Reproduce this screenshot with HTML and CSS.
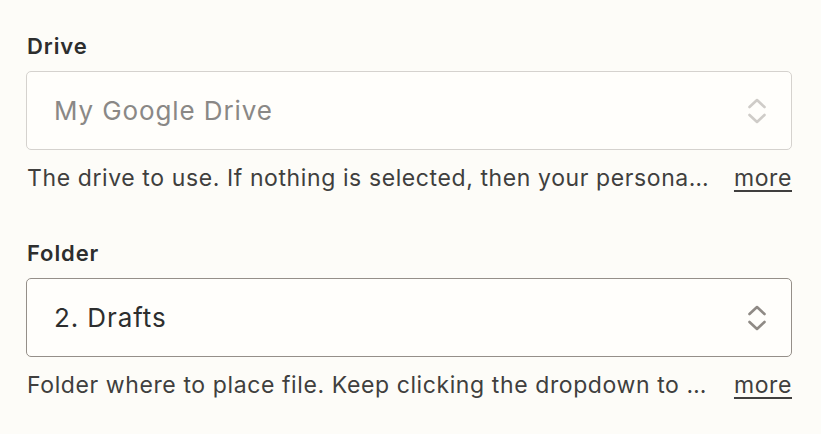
FILE: index.html
```html
<!DOCTYPE html>
<html lang="en">
<head>
    <meta charset="UTF-8">
    <meta name="viewport" content="width=device-width, initial-scale=1.0">
    <title>Google Drive fields</title>
    <link rel="stylesheet" href="styles.css">
</head>
<body>
    <div class="form">
        <!-- Drive field -->
        <div class="field">
            <label class="field-label">Drive</label>
            <div class="select disabled">
                <span class="select-value">My Google Drive</span>
                <svg class="chevrons" width="20" height="28" viewBox="0 0 20 28" fill="none" stroke="currentColor" stroke-width="2.6" stroke-linecap="round" stroke-linejoin="round">
                    <path d="M2.5 10 L10 3 L17.5 10"/>
                    <path d="M2.5 18 L10 25 L17.5 18"/>
                </svg>
            </div>
            <div class="help">
                <p class="help-text">The drive to use. If nothing is selected, then your personal Google Drive will be used.</p>
                <a class="more" href="#">more</a>
            </div>
        </div>

        <!-- Folder field -->
        <div class="field">
            <label class="field-label">Folder</label>
            <div class="select">
                <span class="select-value">2. Drafts</span>
                <svg class="chevrons" width="20" height="28" viewBox="0 0 20 28" fill="none" stroke="currentColor" stroke-width="2.6" stroke-linecap="round" stroke-linejoin="round">
                    <path d="M2.5 10 L10 3 L17.5 10"/>
                    <path d="M2.5 18 L10 25 L17.5 18"/>
                </svg>
            </div>
            <div class="help">
                <p class="help-text">Folder where to place file. Keep clicking the dropdown to go into subfolders.</p>
                <a class="more" href="#">more</a>
            </div>
        </div>
    </div>
</body>
</html>
```

FILE: styles.css
```css
* {
    margin: 0;
    padding: 0;
    box-sizing: border-box;
}

body {
    font-family: Inter, "Noto Sans", sans-serif;
    background-color: #fdfcf8;
    color: #403f3e;
}

.form {
    width: 766px;
    margin: 32px 0 0 26px;
    display: flex;
    flex-direction: column;
    gap: 45px;
}

.field-label {
    display: block;
    font-size: 22px;
    font-weight: 600;
    line-height: 28px;
    letter-spacing: 0.9px;
    color: #2d2e2e;
    padding-left: 1px;
    margin-bottom: 11px;
}

.select {
    height: 79px;
    border: 1px solid #958f89;
    border-radius: 5px;
    background-color: #fffefb;
    display: flex;
    align-items: center;
    justify-content: space-between;
    padding: 0 24px 0 27px;
    color: #2d2e2e;
}

.select-value {
    font-size: 26px;
    letter-spacing: 0.9px;
}

.chevrons {
    color: #8f8a85;
}

.select.disabled {
    border-color: #d5d2ce;
}

.select.disabled .select-value {
    color: #8a8886;
}

.select.disabled .chevrons {
    color: #cfccc8;
}

.help {
    display: flex;
    align-items: baseline;
    gap: 22px;
    margin-top: 12px;
    font-size: 23px;
    line-height: 32px;
    letter-spacing: 0.6px;
}

.help-text {
    flex: 1;
    white-space: nowrap;
    overflow: hidden;
    text-overflow: ellipsis;
    padding-left: 1px;
}

.more {
    color: #403f3e;
    text-decoration: underline;
    text-underline-offset: 4px;
}
```
